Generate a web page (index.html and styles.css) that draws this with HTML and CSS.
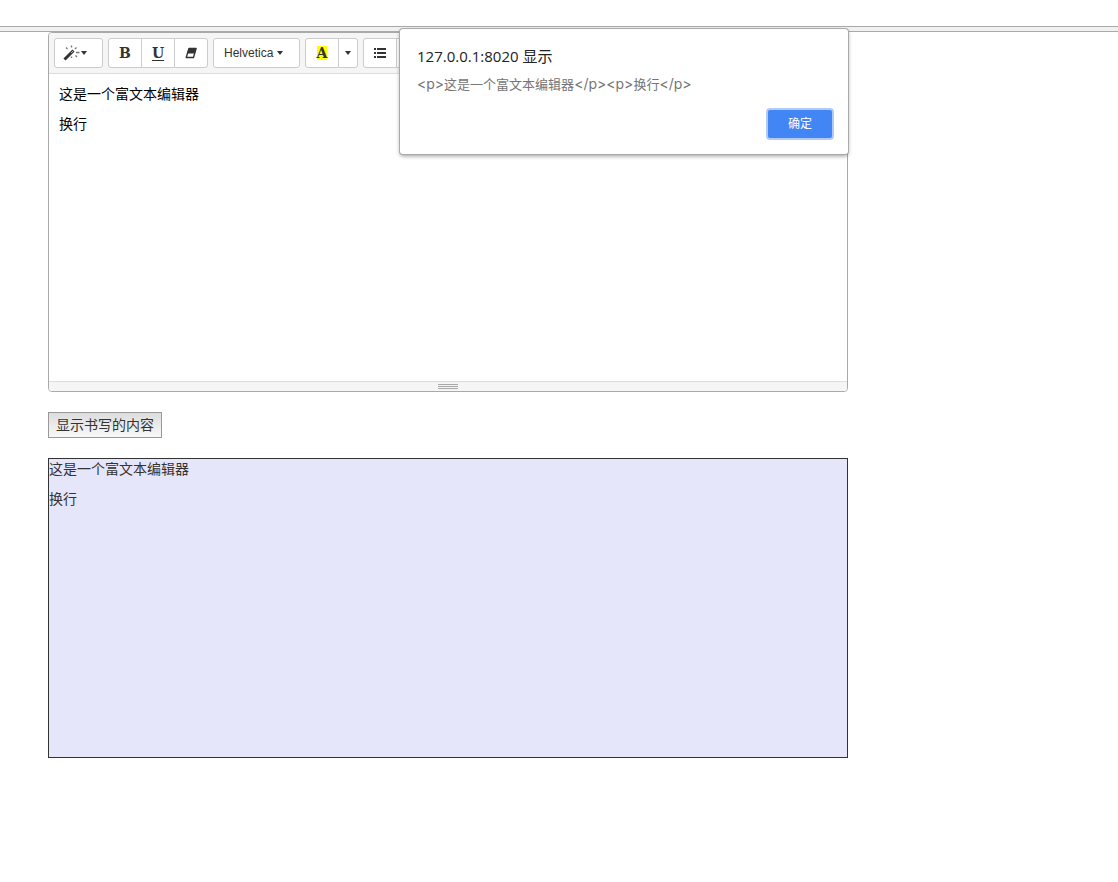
FILE: index.html
```html
<!DOCTYPE html>
<html lang="zh-CN">
<head>
<meta charset="utf-8">
<title>富文本编辑器</title>
<link rel="stylesheet" href="styles.css">
</head>
<body>
<div class="browser-edge"></div>
<main class="page">
  <section class="editor">
    <div class="toolbar">
      <div class="group">
        <button class="tool tool-magic" type="button" aria-label="样式">
          <svg width="18" height="16" viewBox="0 0 18 16" aria-hidden="true">
            <path d="M1.500 14.500 10.500 5.500" stroke="#333" stroke-width="3" fill="none"/>
            <path d="M8.300 7.700 9.800 6.200" stroke="#ddd" stroke-width="1" fill="none"/>
            <path d="M3 2.500 4.500 4M8.500 0.500V2.500M13.500 2.500 12 4M13 7.500H16.500M12.500 10.500 14 12M8.500 11.500V13" stroke="#777" stroke-width="1.400" fill="none"/>
          </svg>
          <span class="caret"></span>
        </button>
      </div>
      <div class="group">
        <button class="tool tool-letter" type="button">B</button>
        <button class="tool tool-letter underline" type="button">U</button>
        <button class="tool tool-icon" type="button" aria-label="清除格式">
          <svg width="12" height="12" viewBox="0 0 12 12" aria-hidden="true">
            <path d="M4 1.500H11L8.500 10.500H1.200Z" fill="#fff" stroke="#333" stroke-width="1.400" stroke-linejoin="round"/>
            <path d="M4 1.500H11L9.700 6H2.600Z" fill="#333" stroke="#333" stroke-linejoin="round"/>
          </svg>
        </button>
      </div>
      <div class="group">
        <button class="tool tool-font" type="button">Helvetica <span class="caret"></span></button>
      </div>
      <div class="group">
        <button class="tool tool-letter" type="button"><span class="highlight">A</span></button>
        <button class="tool tool-drop" type="button" aria-label="更多颜色"><span class="caret"></span></button>
      </div>
      <div class="group">
        <button class="tool tool-icon" type="button" aria-label="无序列表">
          <svg width="14" height="12" viewBox="0 0 14 12" aria-hidden="true">
            <path d="M1 1H3V3H1ZM1 5H3V7H1ZM1 9H3V11H1ZM4 1H13V3H4ZM4 5H13V7H4ZM4 9H13V11H4Z" fill="#333"/>
          </svg>
        </button>
        <button class="tool tool-icon" type="button" aria-label="有序列表"></button>
      </div>
    </div>
    <div class="editable" contenteditable="true">
      <p>这是一个富文本编辑器</p>
      <p>换行</p>
    </div>
    <div class="statusbar">
      <span class="grip"></span><span class="grip"></span><span class="grip"></span>
    </div>
  </section>
  <button class="show-button" type="button">显示书写的内容</button>
  <section class="output">
    <p>这是一个富文本编辑器</p>
    <p>换行</p>
  </section>
</main>
<div class="dialog" role="alertdialog" aria-labelledby="dialog-title" aria-describedby="dialog-message">
  <h1 class="dialog-title" id="dialog-title">127.0.0.1:8020 显示</h1>
  <p class="dialog-message" id="dialog-message"><span class="tag">&lt;p&gt;</span>这是一个富文本编辑器<span class="tag">&lt;/p&gt;&lt;p&gt;</span>换行<span class="tag">&lt;/p&gt;</span></p>
  <button class="confirm" type="button">确定</button>
</div>
</body>
</html>
```
FILE: styles.css
```css
* {
  box-sizing: border-box;
}

body {
  margin: 0;
  padding-top: 26px;
  background: #fff;
  color: #333;
  font: 14px/20px "Liberation Sans", "Noto Sans CJK SC", sans-serif;
}

p {
  margin: 0 0 10px;
}

button {
  margin: 0;
  color: inherit;
  font: inherit;
}

.browser-edge {
  height: 6px;
  border: solid #a9a9a9;
  border-width: 1px 0;
  background: #f1f1f1;
}

.page {
  display: flex;
  flex-direction: column;
  align-items: flex-start;
  gap: 20px;
  max-width: 848px;
  padding-left: 48px;
}

.editor {
  width: 100%;
  border: 1px solid #a9a9a9;
  border-radius: 4px;
  overflow: hidden;
}

.toolbar {
  display: flex;
  gap: 5px;
  padding: 5px;
  border-bottom: 1px solid #ddd;
  background: #f5f5f5;
}

.group {
  display: flex;
}

.tool {
  display: flex;
  align-items: center;
  justify-content: center;
  height: 30px;
  padding: 0;
  border: 1px solid #ccc;
  background: #fff;
  font-size: 12px;
}

.tool + .tool {
  margin-left: -1px;
}

.tool:first-child {
  border-radius: 3px 0 0 3px;
}

.tool:last-child {
  border-radius: 0 3px 3px 0;
}

.tool:only-child {
  border-radius: 3px;
}

.tool-magic {
  justify-content: flex-start;
  width: 49px;
  padding-left: 8px;
}

.tool-letter,
.tool-icon {
  width: 34px;
}

.tool-letter {
  font: bold 14px/16px "DejaVu Serif", serif;
}

.underline {
  text-decoration: underline;
  text-decoration-thickness: 1px;
  text-underline-offset: 2px;
}

.tool-font {
  justify-content: flex-start;
  gap: 4px;
  width: 87px;
  padding-left: 10px;
}

.tool-drop {
  width: 20px;
}

.highlight {
  height: 14px;
  background: #ff0;
  line-height: 14px;
}

.caret {
  border: solid transparent;
  border-width: 4px 3px 0;
  border-top-color: #333;
}

.editable {
  min-height: 307px;
  padding: 10px;
  color: #000;
  outline: 0;
}

.statusbar {
  display: flex;
  flex-direction: column;
  align-items: center;
  gap: 1px;
  padding: 2px 0;
  border-top: 1px solid #ddd;
  background: #f5f5f5;
}

.grip {
  width: 20px;
  height: 1px;
  background: #a9a9a9;
}

.show-button {
  height: 26px;
  padding: 0 7px;
  border: 1px solid #999;
  background: linear-gradient(#ddd, #f8f8f8);
}

.output {
  width: 100%;
  min-height: 300px;
  border: 1px solid #333;
  background: #e6e6fa;
}

.dialog {
  position: absolute;
  top: 29px;
  left: 400px;
  display: flex;
  flex-direction: column;
  width: 448px;
  padding: 17px 16px 16px 17px;
  border-radius: 3px;
  background: #fff;
  box-shadow: 0 0 0 1px #aaa, 0 2px 4px #0006;
}

.dialog-title {
  margin: 0 0 8px;
  color: #222;
  font: 15px/20px "Open Sans", "Noto Sans CJK SC", sans-serif;
}

.dialog-message {
  margin: 0 0 16px;
  color: #757575;
  font: 13px/20px Inter, "Noto Sans CJK SC", sans-serif;
}

.tag {
  font-size: 14px;
  line-height: 16px;
}

.confirm {
  align-self: flex-end;
  width: 64px;
  height: 28px;
  padding: 0;
  border: 0;
  border-radius: 2px;
  background: #4285f4;
  box-shadow: 0 0 0 2px #b0cbfa;
  color: #fff;
  font-size: 12px;
}
```
